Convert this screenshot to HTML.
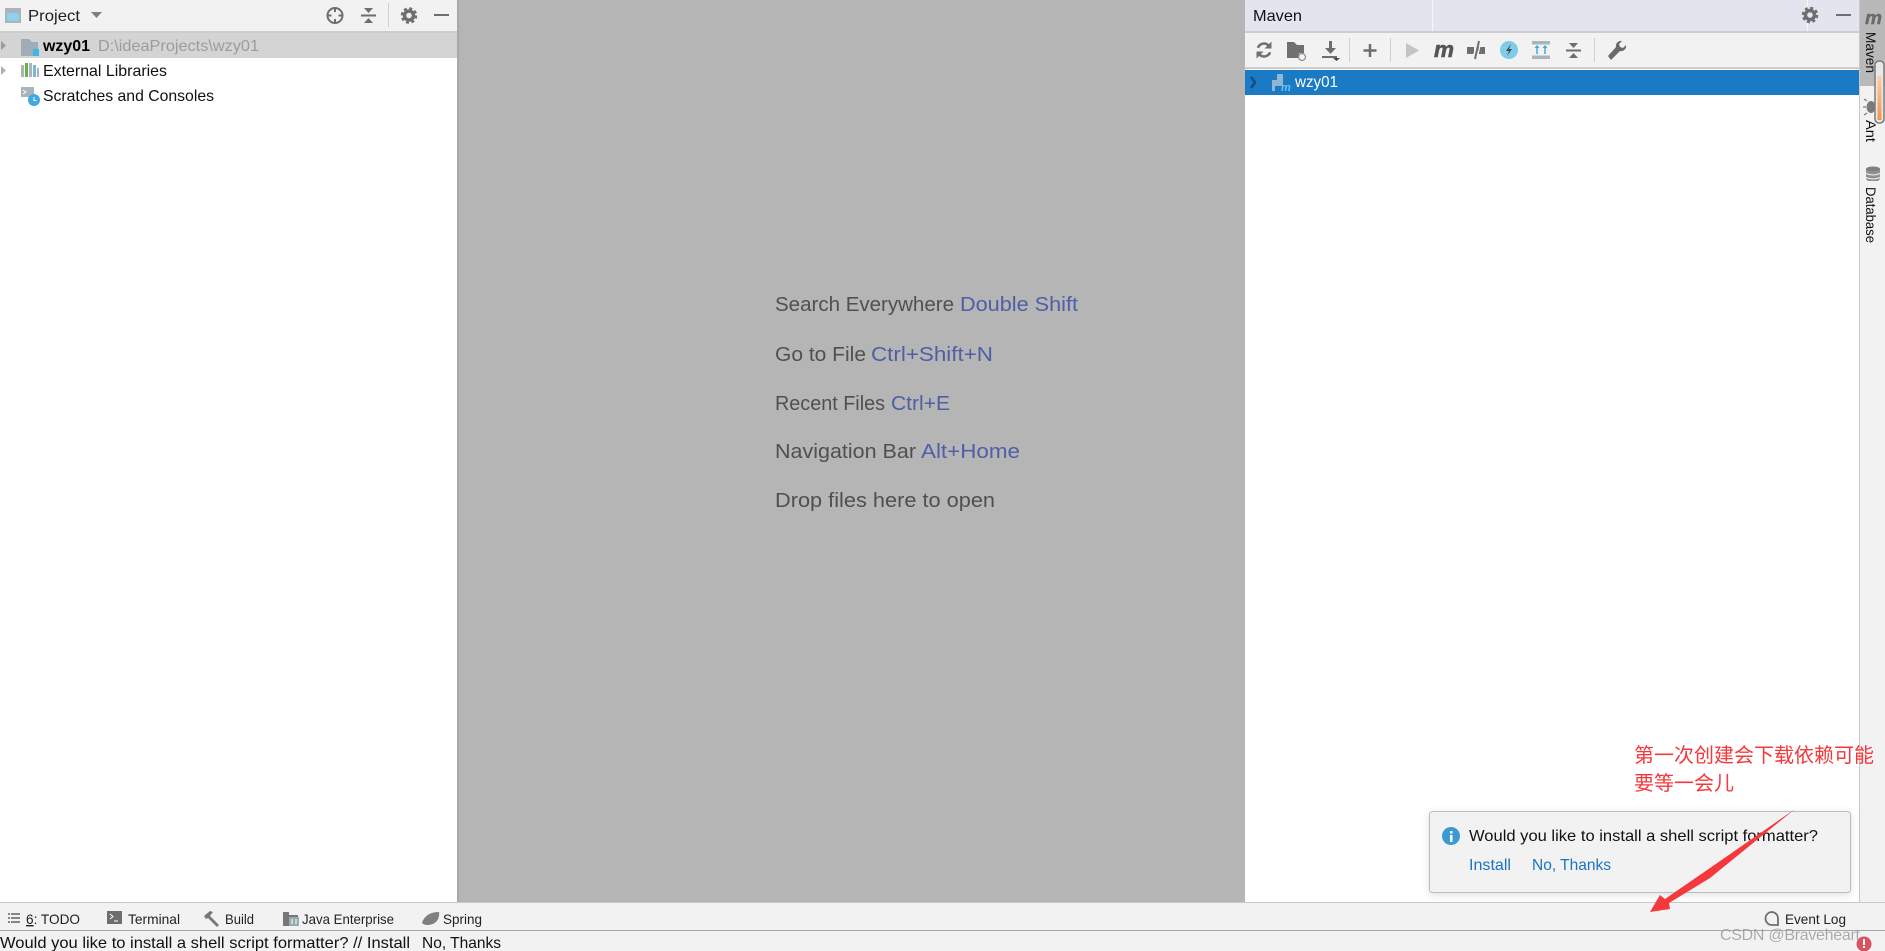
<!DOCTYPE html>
<html lang="zh">
<head>
<meta charset="utf-8">
<title>Maven</title>
<style>
html,body{margin:0;padding:0;width:1885px;height:951px;overflow:hidden;background:#fff}
svg{display:block}
text{font-family:"Liberation Sans","Noto Sans CJK SC",sans-serif}
</style>
</head>
<body>
<svg width="1885" height="951" viewBox="0 0 1885 951" xmlns="http://www.w3.org/2000/svg">
<defs>
<filter id="sh" x="-5%" y="-10%" width="110%" height="125%"><feDropShadow dx="0" dy="2" stdDeviation="4" flood-color="#000" flood-opacity=".12"/></filter>
<linearGradient id="or" x1="0" y1="0" x2="0" y2="1"><stop offset="0" stop-color="#fbd0a4"/><stop offset="1" stop-color="#f5924a"/></linearGradient>
</defs>
<rect width="1885" height="951" fill="#fff"/>

<!-- Left panel -->
<rect x="0" y="0" width="457" height="31" fill="#f2f2f2"/>
<rect x="0" y="31" width="457" height="2" fill="#cdcdcd"/>
<rect x="0" y="33" width="457" height="25" fill="#d4d4d4"/>
<rect x="457" y="0" width="2" height="903" fill="#a8a8a8"/>
<!-- Project icon -->
<rect x="5" y="8" width="16" height="15" fill="#a9b4bb"/><rect x="7" y="13" width="12" height="8" fill="#8fd0ee"/>
<text x="28" y="21" font-size="16" fill="#1e1e1e" textLength="52" lengthAdjust="spacingAndGlyphs">Project</text>
<path d="M91 12h11l-5.500 6z" fill="#808080"/>
<!-- crosshair -->
<g fill="none" stroke="#6e6e6e" stroke-width="2"><circle cx="335" cy="15.500" r="7.500"/><path d="M335 8v4M335 19v4M327.500 15.500h4M338.500 15.500h4"/></g>
<!-- collapse -->
<path d="M361 15.500h15" stroke="#6e6e6e" stroke-width="2"/><path d="M364 8h9l-4.500 5zM364 23h9l-4.500-5z" fill="#6e6e6e"/>
<rect x="388" y="3" width="1" height="24" fill="#d0d0d0"/>
<!-- gear -->
<g fill="none" stroke="#6e6e6e"><circle cx="409" cy="15.500" r="4.500" stroke-width="3.500"/><circle cx="409" cy="15.500" r="7" stroke-width="2.500" stroke-dasharray="3 2.500"/></g>
<rect x="434" y="14" width="15" height="2" fill="#6e6e6e"/>

<!-- Tree -->
<path d="M1 41l5 4.500-5 4.500z" fill="#9a9a9a"/>
<path d="M1 66l5 4.500-5 4.500z" fill="#b0b0b0"/>
<path d="M21 39h8l3 3h6v14H21z" fill="#9fadb6"/><rect x="33" y="49" width="6" height="7" fill="#40b6e0"/>
<text x="43" y="51" font-size="16" font-weight="700" fill="#000" textLength="47" lengthAdjust="spacingAndGlyphs">wzy01</text>
<text x="98" y="51" font-size="16" fill="#9c9c9c" textLength="161" lengthAdjust="spacingAndGlyphs">D:\ideaProjects\wzy01</text>
<g><rect x="21" y="65" width="3" height="12" fill="#a9b4bb"/><rect x="25" y="63" width="3" height="14" fill="#62b543"/><rect x="29" y="63" width="3" height="14" fill="#a9b4bb"/><rect x="33" y="65" width="3" height="12" fill="#7cb7d8"/><rect x="37" y="68" width="2" height="9" fill="#a9b4bb"/></g>
<text x="43" y="76" font-size="16" fill="#111" textLength="124" lengthAdjust="spacingAndGlyphs">External Libraries</text>
<rect x="21" y="87" width="13" height="10" fill="#a9b4bb"/><path d="M23 90l3 2-3 2" fill="none" stroke="#fff" stroke-width="1"/>
<circle cx="34" cy="100" r="6" fill="#40a9e0"/><path d="M34 97v3.500h2.500" fill="none" stroke="#fff" stroke-width="1"/>
<text x="43" y="101" font-size="16" fill="#111" textLength="171" lengthAdjust="spacingAndGlyphs">Scratches and Consoles</text>

<!-- Editor -->
<rect x="459" y="0" width="786" height="903" fill="#b5b5b5"/>
<g font-size="20" fill="#505050">
<text x="775" y="311" textLength="179" lengthAdjust="spacingAndGlyphs">Search Everywhere</text>
<text x="960" y="311" fill="#4f5fa6" textLength="118" lengthAdjust="spacingAndGlyphs">Double Shift</text>
<text x="775" y="361" textLength="91" lengthAdjust="spacingAndGlyphs">Go to File</text>
<text x="871" y="361" fill="#4f5fa6" textLength="122" lengthAdjust="spacingAndGlyphs">Ctrl+Shift+N</text>
<text x="775" y="410" textLength="110" lengthAdjust="spacingAndGlyphs">Recent Files</text>
<text x="891" y="410" fill="#4f5fa6" textLength="59" lengthAdjust="spacingAndGlyphs">Ctrl+E</text>
<text x="775" y="458" textLength="141" lengthAdjust="spacingAndGlyphs">Navigation Bar</text>
<text x="921" y="458" fill="#4f5fa6" textLength="99" lengthAdjust="spacingAndGlyphs">Alt+Home</text>
<text x="775" y="507" textLength="220" lengthAdjust="spacingAndGlyphs">Drop files here to open</text>
</g>

<!-- Maven panel -->
<rect x="1245" y="0" width="615" height="31" fill="#e2e5ee"/>
<rect x="1432" y="0" width="1" height="31" fill="#f5f6f9"/>
<rect x="1807" y="0" width="1" height="31" fill="#f5f6f9"/>
<rect x="1245" y="31" width="615" height="2" fill="#cdcdcd"/>
<rect x="1245" y="33" width="615" height="34" fill="#f2f2f2"/>
<rect x="1245" y="67" width="615" height="2" fill="#cdcdcd"/>
<rect x="1245" y="70" width="615" height="25" fill="#1a7ac4"/>
<text x="1253" y="21" font-size="16" fill="#111" textLength="49" lengthAdjust="spacingAndGlyphs">Maven</text>
<!-- panel gear/minus -->
<g fill="none" stroke="#6e6e6e"><circle cx="1810" cy="15" r="4.500" stroke-width="3.500"/><circle cx="1810" cy="15" r="7" stroke-width="2.500" stroke-dasharray="3 2.500"/></g>
<rect x="1836" y="14" width="15" height="2" fill="#6e6e6e"/>

<!-- refresh -->
<g fill="none" stroke="#707070" stroke-width="2.500"><circle cx="1264" cy="50" r="6.500" stroke-dasharray="15 5.400" transform="rotate(-160 1264 50)"/></g>
<path d="M1271.500 41.500v7h-7zM1256.500 58.500v-7h7z" fill="#707070"/>
<!-- folder sync -->
<path d="M1287 42h7l3 3h7v8h-5v5h-12z" fill="#707070"/>
<circle cx="1302" cy="57" r="3.500" fill="none" stroke="#909090" stroke-width="1.300"/>
<!-- download -->
<path d="M1329 41h3v7h4l-5.500 6-5.500-6h4z" fill="#6e6e6e"/><rect x="1322" y="56" width="15" height="2" fill="#6e6e6e"/><path d="M1333 58h7l-3.500 3z" fill="#444"/>
<rect x="1349" y="38" width="1" height="24" fill="#d0d0d0"/>
<!-- plus -->
<path d="M1370 44v13M1363.500 50.500h13" stroke="#6e6e6e" stroke-width="2.500" fill="none"/>
<rect x="1390" y="38" width="1" height="24" fill="#d0d0d0"/>
<!-- play -->
<path d="M1406 43l13 7.500-13 7.500z" fill="#c4c4c4"/>
<!-- m -->
<text x="1434" y="57" font-size="22" font-weight="700" font-style="italic" fill="#555" stroke="#555" stroke-width=".6" textLength="20" lengthAdjust="spacingAndGlyphs">m</text>
<!-- skip tests -->
<path d="M1467 47h7v7h-7zM1478 47h7v7h-7z" fill="#6e6e6e"/><path d="M1477 41l-4 18M1481 41l-4 18" stroke="#f2f2f2" stroke-width="1.300" fill="none"/><path d="M1479 41l-4 18" stroke="#6e6e6e" stroke-width="2" fill="none"/>
<!-- lightning -->
<circle cx="1509" cy="50" r="9" fill="#7fcbe8"/><path d="M1511 44l-5 7h3l-2 5 5-7h-3z" fill="#3b4650"/>
<!-- generate -->
<rect x="1532" y="41" width="18" height="3.500" fill="#a9b4bb"/><rect x="1532" y="55.500" width="18" height="3.500" fill="#a9b4bb"/>
<path d="M1537 54v-7M1545 54v-7" stroke="#40a9e0" stroke-width="1.500"/><path d="M1534.500 48l2.500-3 2.500 3zM1542.500 48l2.500-3 2.500 3z" fill="#40a9e0"/>
<!-- collapse -->
<path d="M1566 50.500h15" stroke="#6e6e6e" stroke-width="2"/><path d="M1569 43h9l-4.500 5zM1569 58h9l-4.500-5z" fill="#6e6e6e"/>
<rect x="1594" y="38" width="1" height="24" fill="#d0d0d0"/>
<!-- wrench -->
<path d="M1608 56l8-9a5 5 0 0 1 6-6l-3 3 1 3 3 1 3-3a5 5 0 0 1-6 6l-9 9z" fill="#6a6a6a"/>

<!-- maven row -->
<path d="M1251 77l4 5.500-4 5.500" fill="none" stroke="#114f80" stroke-width="2.500"/>
<path d="M1283 74h-6v6h-5v11h3v-5h8z" fill="#8fb6d3"/><text x="1281" y="91" font-size="11" font-weight="700" font-style="italic" fill="#6cc3ea">m</text>
<text x="1295" y="87" font-size="16" fill="#fff" textLength="43" lengthAdjust="spacingAndGlyphs">wzy01</text>

<!-- Right stripe -->
<rect x="1860" y="0" width="25" height="903" fill="#f2f2f2"/>
<rect x="1859" y="0" width="1" height="903" fill="#c8c8c8"/>
<rect x="1860" y="0" width="25" height="86" fill="#b9b9b9"/>
<text x="1865" y="24" font-size="18" font-weight="700" font-style="italic" fill="#6a6a6a" stroke="#6a6a6a" stroke-width=".4" textLength="17" lengthAdjust="spacingAndGlyphs">m</text>
<g font-size="14" fill="#111">
<text transform="translate(1866 32) rotate(90)" textLength="41" lengthAdjust="spacingAndGlyphs">Maven</text>
<text transform="translate(1866 120) rotate(90)" textLength="22" lengthAdjust="spacingAndGlyphs">Ant</text>
<text transform="translate(1866 187) rotate(90)" textLength="56" lengthAdjust="spacingAndGlyphs">Database</text>
</g>
<ellipse cx="1871" cy="107" rx="4.500" ry="6" fill="#7a7a7a"/><path d="M1867 101l-3-2M1875 101l3-2M1866 107h-3M1876 107h3M1867 113l-3 2M1875 113l3 2" stroke="#7a7a7a" stroke-width="1.200"/>
<rect x="1866" y="167" width="14" height="14" rx="3" fill="#909090"/><ellipse cx="1873" cy="169" rx="7" ry="2.500" fill="#808080"/><path d="M1866 173.500q7 3 14 0M1866 177.500q7 3 14 0" stroke="#f2f2f2" fill="none"/>
<rect x="1875" y="61" width="9" height="62" rx="4" fill="#e8e8e8" stroke="#7a7a7a" stroke-width="1.500"/>
<rect x="1877.500" y="76" width="4" height="44" fill="url(#or)"/>

<!-- Bottom bars -->
<rect x="0" y="902" width="1885" height="1" fill="#c8c8c8"/>
<rect x="0" y="903" width="1885" height="27" fill="#f2f2f2"/>
<rect x="0" y="930" width="1885" height="1" fill="#a6a6a6"/>
<rect x="0" y="931" width="1885" height="20" fill="#f2f2f2"/>
<!-- todo -->
<path d="M8 914h12M8 918h12M8 922h12" stroke="#777" stroke-width="1.800" stroke-dasharray="2 1 9"/>
<text x="26" y="924" font-size="14" fill="#222" textLength="54" lengthAdjust="spacingAndGlyphs"><tspan text-decoration="underline">6</tspan>: TODO</text>
<rect x="107" y="911" width="15" height="13" fill="#6e6e6e"/><path d="M110 914l3 2.500-3 2.500M114 921h4" stroke="#fff" stroke-width="1" fill="none"/>
<text x="128" y="924" font-size="14" fill="#222" textLength="52" lengthAdjust="spacingAndGlyphs">Terminal</text>
<path d="M204 916l6-5 3 1-3 4 9 9-2 2-9-9-2 1z" fill="#777"/>
<text x="225" y="924" font-size="14" fill="#222" textLength="29" lengthAdjust="spacingAndGlyphs">Build</text>
<path d="M283 912h6v3h9v11h-15z" fill="#777"/><rect x="289" y="917" width="10" height="9" fill="#9aa"/><path d="M292 919v5M296 919v5" stroke="#fff"/>
<text x="302" y="924" font-size="14" fill="#222" textLength="92" lengthAdjust="spacingAndGlyphs">Java Enterprise</text>
<path d="M422 923c2-7 8-11 17-11 1 8-4 13-12 13-2 0-4-1-5-2z" fill="#808080"/>
<text x="443" y="924" font-size="14" fill="#222" textLength="39" lengthAdjust="spacingAndGlyphs">Spring</text>
<path d="M1772 912a6.500 6.500 0 1 0 0 13h6v-6.500a6.500 6.500 0 0 0-6-6.500z" fill="none" stroke="#6e6e6e" stroke-width="1.800"/>
<text x="1785" y="924" font-size="14" fill="#222" textLength="61" lengthAdjust="spacingAndGlyphs">Event Log</text>
<text x="0" y="948" font-size="16" fill="#111" textLength="410" lengthAdjust="spacingAndGlyphs">Would you like to install a shell script formatter? // Install</text>
<text x="422" y="948" font-size="16" fill="#111" textLength="79" lengthAdjust="spacingAndGlyphs">No, Thanks</text>

<!-- Notification -->
<rect x="1429.500" y="811.500" width="421" height="81" rx="3" fill="#f2f2f2" stroke="#bdbdbd" filter="url(#sh)"/>
<circle cx="1451" cy="836" r="9" fill="#3d9ad1"/><rect x="1450" y="835" width="2.500" height="7" fill="#fff"/><rect x="1450" y="831" width="2.500" height="2.500" fill="#fff"/>
<text x="1469" y="841" font-size="16" fill="#111" textLength="349" lengthAdjust="spacingAndGlyphs">Would you like to install a shell script formatter?</text>
<text x="1469" y="870" font-size="16" fill="#1a73c4" textLength="42" lengthAdjust="spacingAndGlyphs">Install</text>
<text x="1532" y="870" font-size="16" fill="#1a73c4" textLength="79" lengthAdjust="spacingAndGlyphs">No, Thanks</text>

<!-- Annotations -->
<text x="1634" y="762" font-size="20" fill="#f5383c">第一次创建会下载依赖可能</text>
<text x="1634" y="790" font-size="20" fill="#f5383c">要等一会儿</text>
<path d="M1650 912L1660 895L1665 899L1710 868L1795 809L1710 878L1669 903L1670 909z" fill="#f5383c"/>

<!-- Watermark -->
<text x="1720" y="940" font-size="16" fill="#8a8a8a" fill-opacity=".75" stroke="#fff" stroke-opacity=".25" stroke-width=".4" textLength="140" lengthAdjust="spacing">CSDN @Braveheart</text>
<circle cx="1864" cy="944" r="7.500" fill="#d9535f"/><rect x="1863" y="939" width="2" height="6" fill="#fff"/><rect x="1863" y="946" width="2" height="2" fill="#fff"/>
</svg>
</body>
</html>
